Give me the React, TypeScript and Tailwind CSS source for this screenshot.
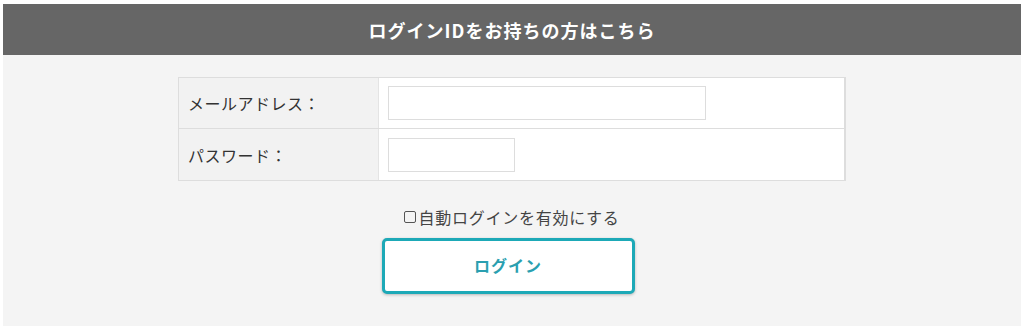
import React from "react";

const font = { fontFamily: '"Noto Sans CJK JP", "Noto Sans", sans-serif' };

export default function App() {
  return (
    <div className="w-[1024px] h-[330px] bg-white pt-[4px] px-[3px]" style={font}>
      <div className="h-[51px] bg-[#666666] flex items-center justify-center">
        <span className="text-white font-bold text-[18px] tracking-[1px] leading-none">
          ログインIDをお持ちの方はこちら
        </span>
      </div>
      <div className="h-[271px] bg-[#f4f4f4] pt-[22px] flex flex-col items-center">
        <div className="w-[668px] border border-[#dddddd] border-r-2">
          <div className="flex h-[51px] border-b border-[#dddddd]">
            <div className="w-[200px] bg-[#f2f2f2] border-r border-[#e4e4e4] flex items-center pl-[9px] text-[16px] tracking-[0.5px] text-[#333333]">
              メールアドレス：
            </div>
            <div className="flex-1 bg-white flex items-center pl-[9px]">
              <div className="w-[318px] h-[34px] border border-[#dddddd] bg-white" />
            </div>
          </div>
          <div className="flex h-[51px]">
            <div className="w-[200px] bg-[#f2f2f2] border-r border-[#e4e4e4] flex items-center pl-[9px] text-[16px] tracking-[0.5px] text-[#333333]">
              パスワード：
            </div>
            <div className="flex-1 bg-white flex items-center pl-[9px]">
              <div className="w-[127px] h-[34px] border border-[#dddddd] bg-white" />
            </div>
          </div>
        </div>
        <div className="mt-[28px] flex items-center text-[16px] tracking-[0.75px] text-[#444444] leading-none">
          <span className="inline-block w-[12px] h-[12px] border-[1.5px] border-[#555555] rounded-[2px] mr-[2px]" />
          自動ログインを有効にする
        </div>
        <div className="mt-[13px] mr-[8px] w-[253px] h-[56px] border-[3px] border-[#1da9b7] rounded-[5px] bg-white shadow-[0_1px_3px_rgba(0,0,0,0.25)] flex items-center justify-center pb-[3px]">
          <span className="text-[#2a9fb0] font-bold text-[16px] tracking-[1px]">ログイン</span>
        </div>
      </div>
    </div>
  );
}
